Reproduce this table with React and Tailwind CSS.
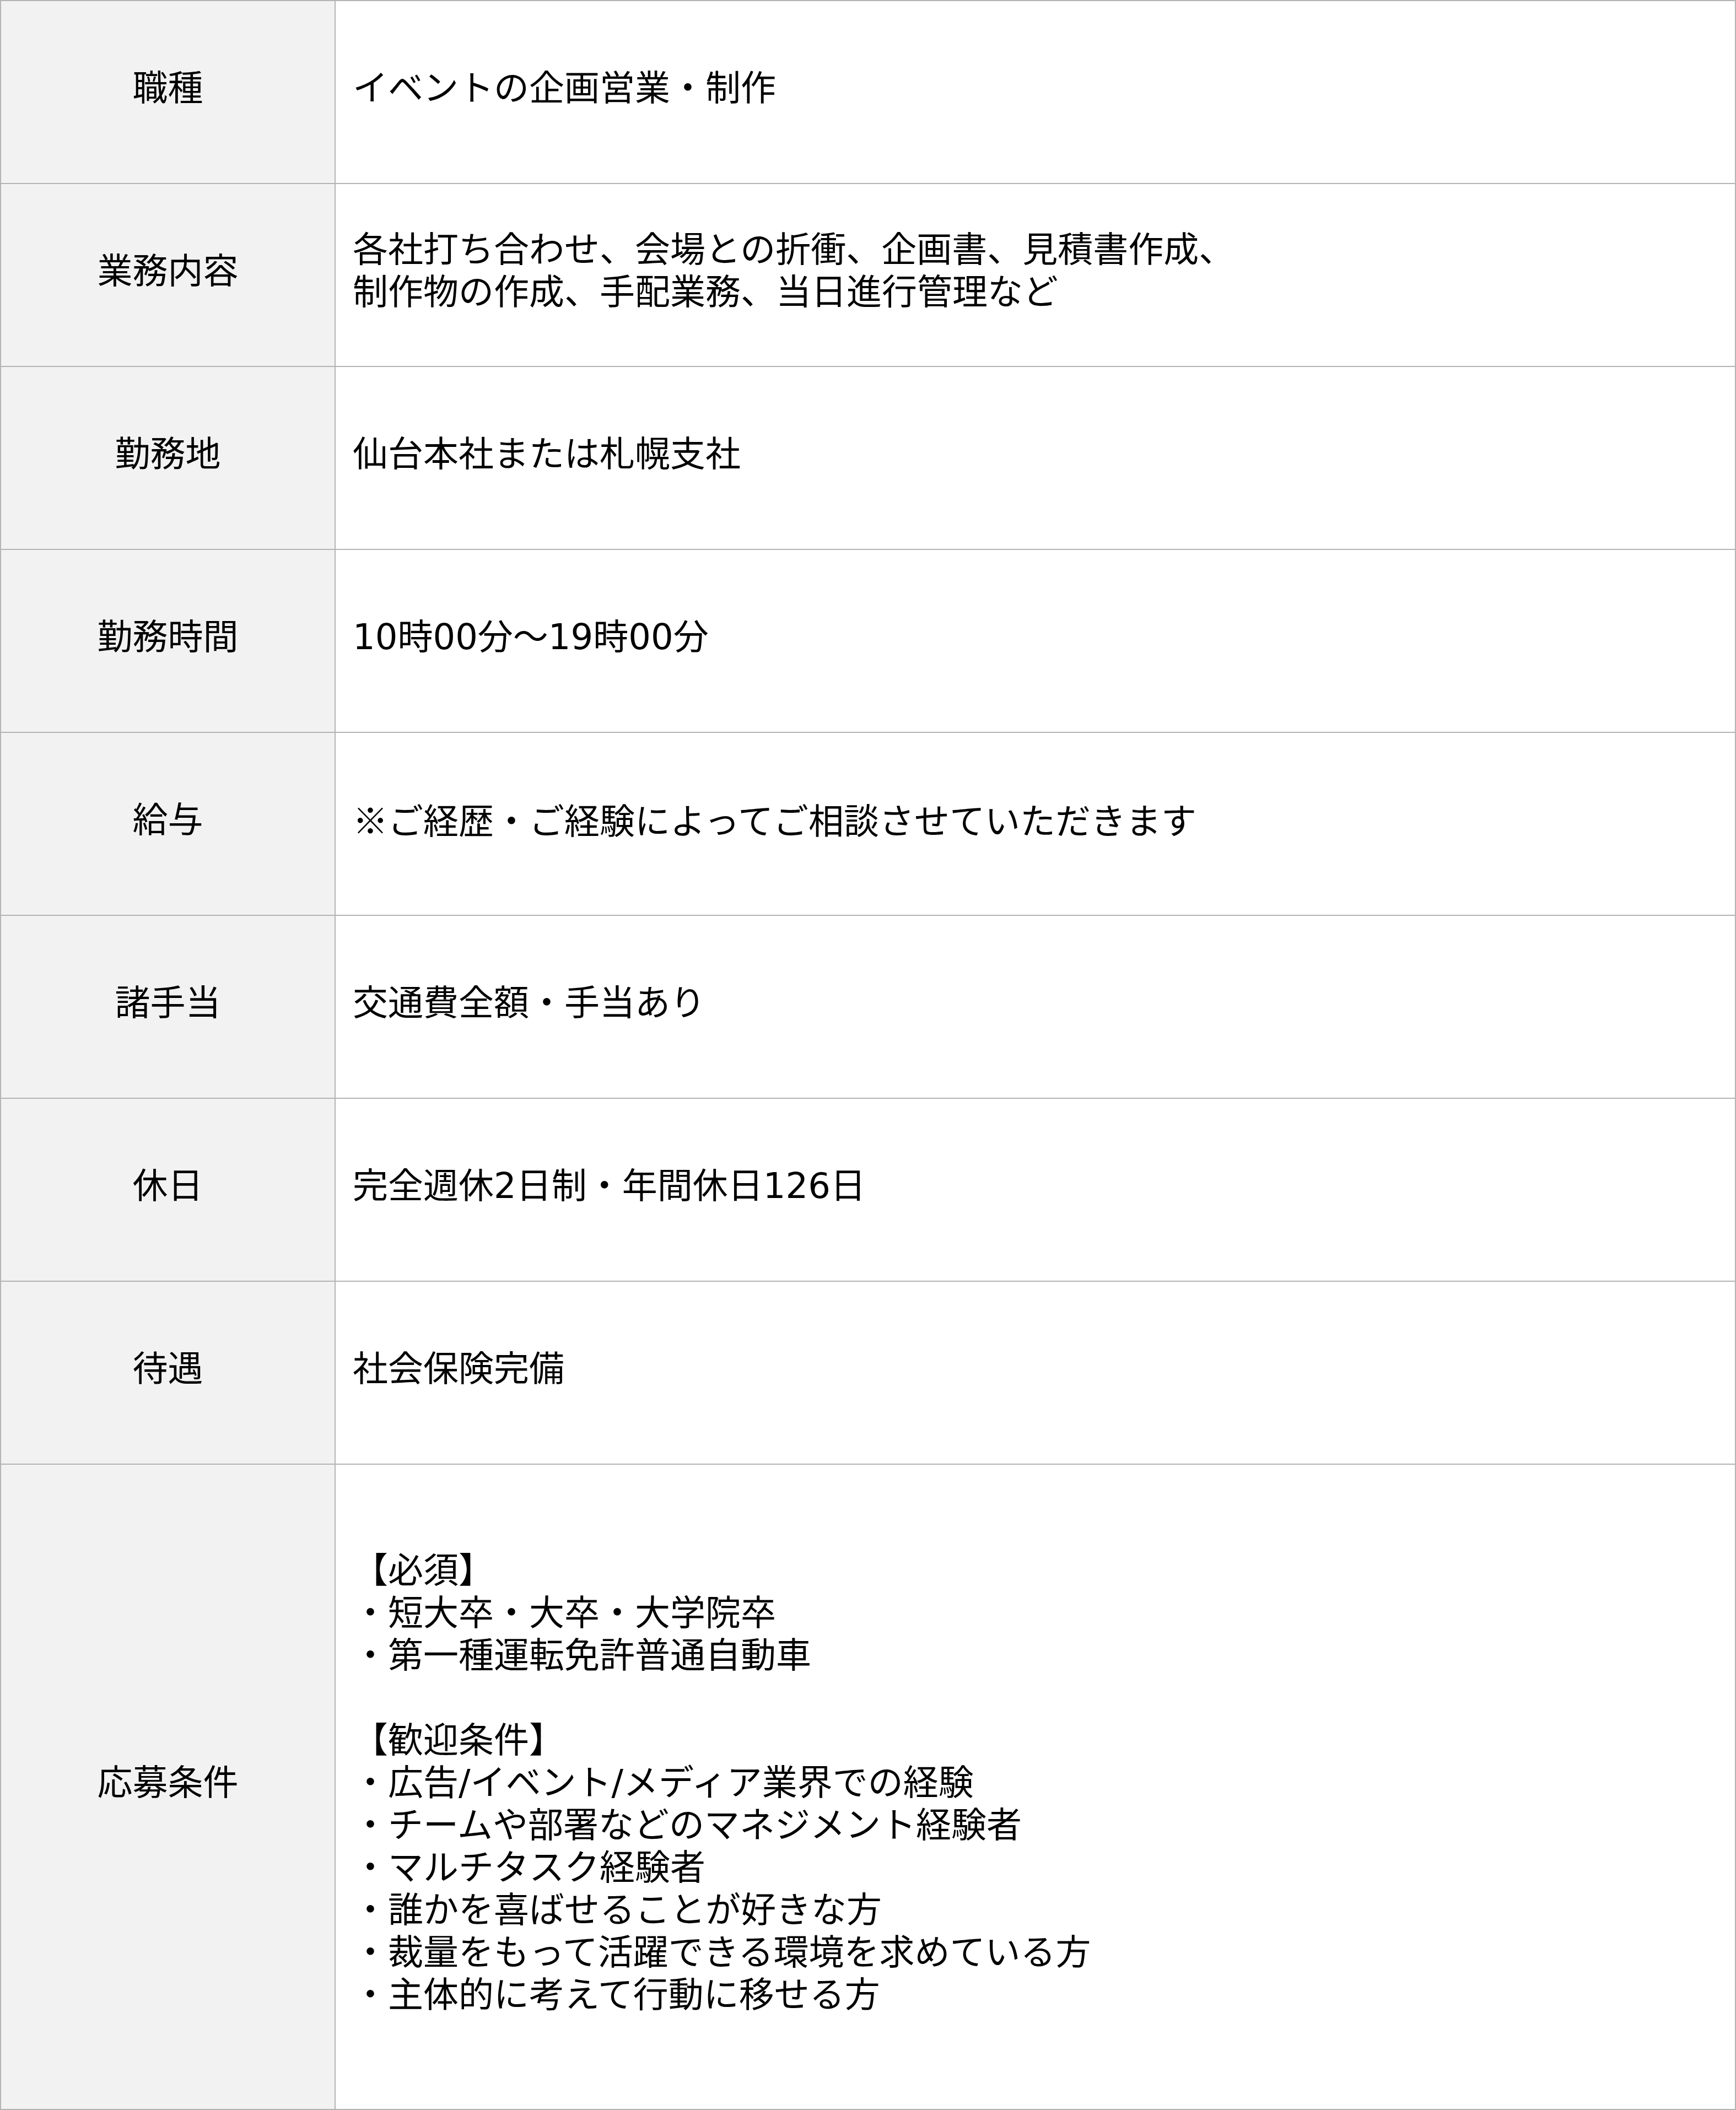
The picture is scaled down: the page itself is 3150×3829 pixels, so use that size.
import React from "react";

const rows = [
  { label: "職種", lines: ["イベントの企画営業・制作"] },
  {
    label: "業務内容",
    lines: [
      "各社打ち合わせ、会場との折衝、企画書、見積書作成、",
      "制作物の作成、手配業務、当日進行管理など",
    ],
  },
  { label: "勤務地", lines: ["仙台本社または札幌支社"] },
  { label: "勤務時間", lines: ["10時00分～19時00分"] },
  { label: "給与", lines: ["※ご経歴・ご経験によってご相談させていただきます"] },
  { label: "諸手当", lines: ["交通費全額・手当あり"] },
  { label: "休日", lines: ["完全週休2日制・年間休日126日"] },
  { label: "待遇", lines: ["社会保険完備"] },
];

const conditions = [
  "【必須】",
  "・短大卒・大卒・大学院卒",
  "・第一種運転免許普通自動車",
  "",
  "【歓迎条件】",
  "・広告/イベント/メディア業界での経験",
  "・チームや部署などのマネジメント経験者",
  "・マルチタスク経験者",
  "・誰かを喜ばせることが好きな方",
  "・裁量をもって活躍できる環境を求めている方",
  "・主体的に考えて行動に移せる方",
];

// ※ is drawn by DejaVu otherwise, keep it in the CJK face
const Line = ({ text }) => {
  if (text === "") return <div className="h-[77px]" />;
  if (text.startsWith("※")) {
    return (
      <div>
        <span className="font-['Noto_Sans_CJK_JP']">※</span>
        {text.slice(1)}
      </div>
    );
  }
  return <div>{text}</div>;
};

const Row = ({ label, children, last }) => (
  <div
    className={
      last
        ? "flex h-[1169px]"
        : "flex h-[332px] border-b-2 border-[#b4b4b4]"
    }
  >
    <div className="w-[607px] shrink-0 bg-[#f2f2f2] border-r-2 border-[#b4b4b4] flex items-center justify-center pb-[14px]">
      {label}
    </div>
    <div className="flex-1 flex flex-col justify-center pl-[31px] pr-8 pb-[14px] bg-white">
      {children}
    </div>
  </div>
);

export default function App() {
  return (
    <div className="w-[3150px] bg-white text-black text-[64px] leading-[77px] font-['DejaVu_Sans','Noto_Sans_CJK_JP',sans-serif]">
      <div className="border-2 border-[#b4b4b4]">
        {rows.map((r) => (
          <Row key={r.label} label={r.label}>
            {r.lines.map((l, i) => (
              <Line key={i} text={l} />
            ))}
          </Row>
        ))}
        <Row label="応募条件" last>
          {conditions.map((l, i) => (
            <Line key={i} text={l} />
          ))}
        </Row>
      </div>
    </div>
  );
}
